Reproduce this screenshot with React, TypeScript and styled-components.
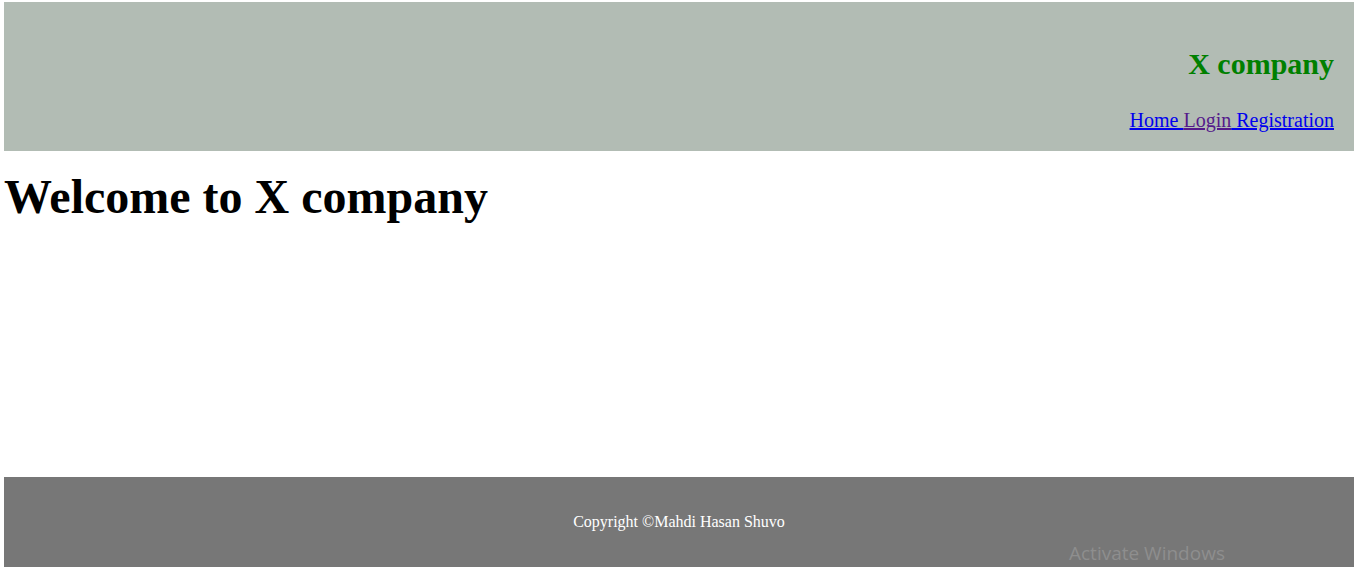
import React from "react";
import styled, { createGlobalStyle } from "styled-components";

const Global = createGlobalStyle`
  html, body { margin: 0; padding: 0; background: #ffffff; }
  body { font-family: "Liberation Serif", "Times New Roman", serif; font-size: 16px; }
  #root { height: 568px; }
`;

const Page = styled.div`
  box-sizing: border-box;
  height: 568px;
  padding: 2px 8px 1px 4px;
  display: flex;
  flex-direction: column;
  position: relative;
`;

const Header = styled.header`
  background: #b2bcb4;
  padding: 20px 20px 19px;
  text-align: right;
  font-size: 20px;
`;

const Brand = styled.h2`
  margin: 25px 0 28px;
  font-size: 30px;
  font-weight: bold;
  color: #008000;
`;

const Nav = styled.nav`
  font-size: 20px;
`;

const NavLink = styled.a<{ $visited?: boolean }>`
  color: ${(p) => (p.$visited ? "#551a8b" : "#0000ee")};
  text-decoration: underline;
  white-space: pre;
`;

const Main = styled.main`
  flex: 1;
`;

const Heading = styled.h1`
  margin: 18px 0 0;
  font-size: 48px;
  font-weight: bold;
  color: #000;
`;

const Footer = styled.footer`
  height: 90px;
  background: #777777;
  color: #ffffff;
  display: flex;
  align-items: center;
  justify-content: center;
  font-size: 16px;
`;

const Watermark = styled.div`
  position: absolute;
  left: 1069px;
  top: 540px;
  font-family: "Open Sans", "Noto Sans", sans-serif;
  font-size: 19px;
  color: #8e8e8e;
  pointer-events: none;
`;

export default function App() {
  return (
    <>
      <Global />
      <Page>
        <Header>
          <Brand>X company</Brand>
          <Nav>
            <NavLink href="#">Home </NavLink>
            <NavLink href="#" $visited>Login</NavLink>
            <NavLink href="#"> Registration</NavLink>
          </Nav>
        </Header>
        <Main>
          <Heading>Welcome to X company</Heading>
        </Main>
        <Footer>Copyright ©Mahdi Hasan Shuvo</Footer>
        <Watermark>Activate Windows</Watermark>
      </Page>
    </>
  );
}
